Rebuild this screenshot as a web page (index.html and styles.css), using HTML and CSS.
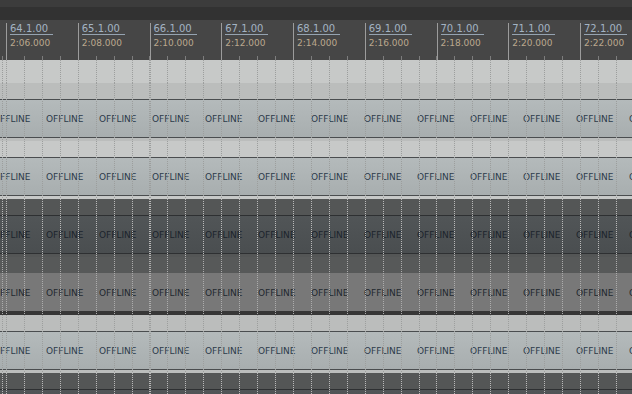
FILE: index.html
```html
<!DOCTYPE html>
<html lang="en">
<head>
    <meta charset="UTF-8">
    <meta name="viewport" content="width=device-width, initial-scale=1.0">
    <title>Arrange View</title>
    <link rel="stylesheet" href="styles.css">
</head>
<body>
    <div class="arrange">
        <div class="toolbar"></div>
        <div class="header"></div>

        <div class="ruler">
            <div class="beat"><span class="bar">64.1.00</span><span class="time">2:06.000</span></div>
            <div class="beat"><span class="bar">65.1.00</span><span class="time">2:08.000</span></div>
            <div class="beat"><span class="bar">66.1.00</span><span class="time">2:10.000</span></div>
            <div class="beat"><span class="bar">67.1.00</span><span class="time">2:12.000</span></div>
            <div class="beat"><span class="bar">68.1.00</span><span class="time">2:14.000</span></div>
            <div class="beat"><span class="bar">69.1.00</span><span class="time">2:16.000</span></div>
            <div class="beat"><span class="bar">70.1.00</span><span class="time">2:18.000</span></div>
            <div class="beat"><span class="bar">71.1.00</span><span class="time">2:20.000</span></div>
            <div class="beat"><span class="bar">72.1.00</span><span class="time">2:22.000</span></div>
        </div>

        <div class="track light first"></div>

        <div class="track light alt">
            <div class="item">
                <span>OFFLINE</span><span>OFFLINE</span><span>OFFLINE</span><span>OFFLINE</span><span>OFFLINE</span><span>OFFLINE</span><span>OFFLINE</span><span>OFFLINE</span><span>OFFLINE</span><span>OFFLINE</span><span>OFFLINE</span><span>OFFLINE</span><span>OFFLINE</span>
            </div>
        </div>

        <div class="track light">
            <div class="item">
                <span>OFFLINE</span><span>OFFLINE</span><span>OFFLINE</span><span>OFFLINE</span><span>OFFLINE</span><span>OFFLINE</span><span>OFFLINE</span><span>OFFLINE</span><span>OFFLINE</span><span>OFFLINE</span><span>OFFLINE</span><span>OFFLINE</span><span>OFFLINE</span>
            </div>
        </div>

        <div class="track dark">
            <div class="item">
                <span>OFFLINE</span><span>OFFLINE</span><span>OFFLINE</span><span>OFFLINE</span><span>OFFLINE</span><span>OFFLINE</span><span>OFFLINE</span><span>OFFLINE</span><span>OFFLINE</span><span>OFFLINE</span><span>OFFLINE</span><span>OFFLINE</span><span>OFFLINE</span>
            </div>
        </div>

        <div class="track dark selected">
            <div class="item">
                <span>OFFLINE</span><span>OFFLINE</span><span>OFFLINE</span><span>OFFLINE</span><span>OFFLINE</span><span>OFFLINE</span><span>OFFLINE</span><span>OFFLINE</span><span>OFFLINE</span><span>OFFLINE</span><span>OFFLINE</span><span>OFFLINE</span><span>OFFLINE</span>
            </div>
        </div>

        <div class="track light alt">
            <div class="item">
                <span>OFFLINE</span><span>OFFLINE</span><span>OFFLINE</span><span>OFFLINE</span><span>OFFLINE</span><span>OFFLINE</span><span>OFFLINE</span><span>OFFLINE</span><span>OFFLINE</span><span>OFFLINE</span><span>OFFLINE</span><span>OFFLINE</span><span>OFFLINE</span>
            </div>
        </div>

        <div class="track dark">
            <div class="item">
                <span>OFFLINE</span><span>OFFLINE</span><span>OFFLINE</span><span>OFFLINE</span><span>OFFLINE</span><span>OFFLINE</span><span>OFFLINE</span><span>OFFLINE</span><span>OFFLINE</span><span>OFFLINE</span><span>OFFLINE</span><span>OFFLINE</span><span>OFFLINE</span>
            </div>
        </div>
    </div>
</body>
</html>
```

FILE: styles.css
```css
body {
    margin: 0;
    background-color: #333;
    font-family: 'DejaVu Sans', 'Liberation Sans', sans-serif;
    overflow: hidden;
}
.arrange {
    width: 632px;
    height: 394px;
    overflow: hidden;
}
.toolbar {
    height: 7px;
    background-color: #3c3c3c;
}
.header {
    height: 13px;
    background-color: #323232;
}

/* timeline ruler */
.ruler {
    display: flex;
    height: 40px;
    padding-left: 6px;
    box-sizing: border-box;
    overflow: hidden;
    background:
        repeating-linear-gradient(90deg, #7d7d7d 0 1px, transparent 1px 17.9375px) 6px 100% / auto 4px repeat-x,
        #464646;
}
.beat {
    flex: 0 0 71.75px;
    box-sizing: border-box;
    margin-top: 3px;
    padding-left: 3px;
    border-left: 1px solid #9c9c9c;
    display: flex;
    flex-direction: column;
    align-items: flex-start;
}
.bar {
    width: 43px;
    font-size: 10px;
    line-height: 11px;
    color: #a3b3c3;
    border-bottom: 1px solid #95a3b1;
}
.time {
    margin-top: 3px;
    font-size: 9px;
    line-height: 10px;
    color: #bba88e;
}

/* tracks */
.track {
    position: relative;
    height: 58px;
    padding-top: 16px;
    box-sizing: border-box;
    --grid: #9c9e9d;
}
.track::after {
    content: "";
    position: absolute;
    inset: 0;
    pointer-events: none;
    background: repeating-linear-gradient(90deg, var(--grid) 0 1px, transparent 1px 17.9375px) 6px 0 / auto 100% repeat-x;
    -webkit-mask-image: repeating-linear-gradient(180deg, #000 0 1px, transparent 1px 2px);
    mask-image: repeating-linear-gradient(180deg, #000 0 1px, transparent 1px 2px);
}
.track.first {
    height: 23px;
    background-color: #c5c7c6;
}
.track.light {
    background-color: #c7c9c8;
}
.track.light.alt {
    background-color: #bbbdbc;
}
.track.dark {
    background-color: #545656;
    --grid: #b8b8b8;
}

.item {
    height: 39px;
    box-sizing: border-box;
    display: flex;
    align-items: center;
    overflow: hidden;
    font-size: 9px;
    color: #2c3b4a;
    background: linear-gradient(#b4babb, #a8aeaf);
    border-top: 1px solid #4a4d4f;
    border-bottom: 1px solid #4a4d4f;
}
.item span {
    flex: 0 0 53px;
    white-space: nowrap;
}
.item span:first-child {
    margin-left: -7px;
}
.dark .item {
    color: #1c242c;
    background: linear-gradient(#515557, #4a4e50);
    border-color: #2e3032;
}
.track.selected {
    background: linear-gradient(to top, #363636 0 3px, #575959 3px);
    --grid: #acacac;
}
.selected .item {
    color: #22282f;
    background: #787878;
    border-top-color: #787878;
    border-bottom-color: #363636;
}
```
